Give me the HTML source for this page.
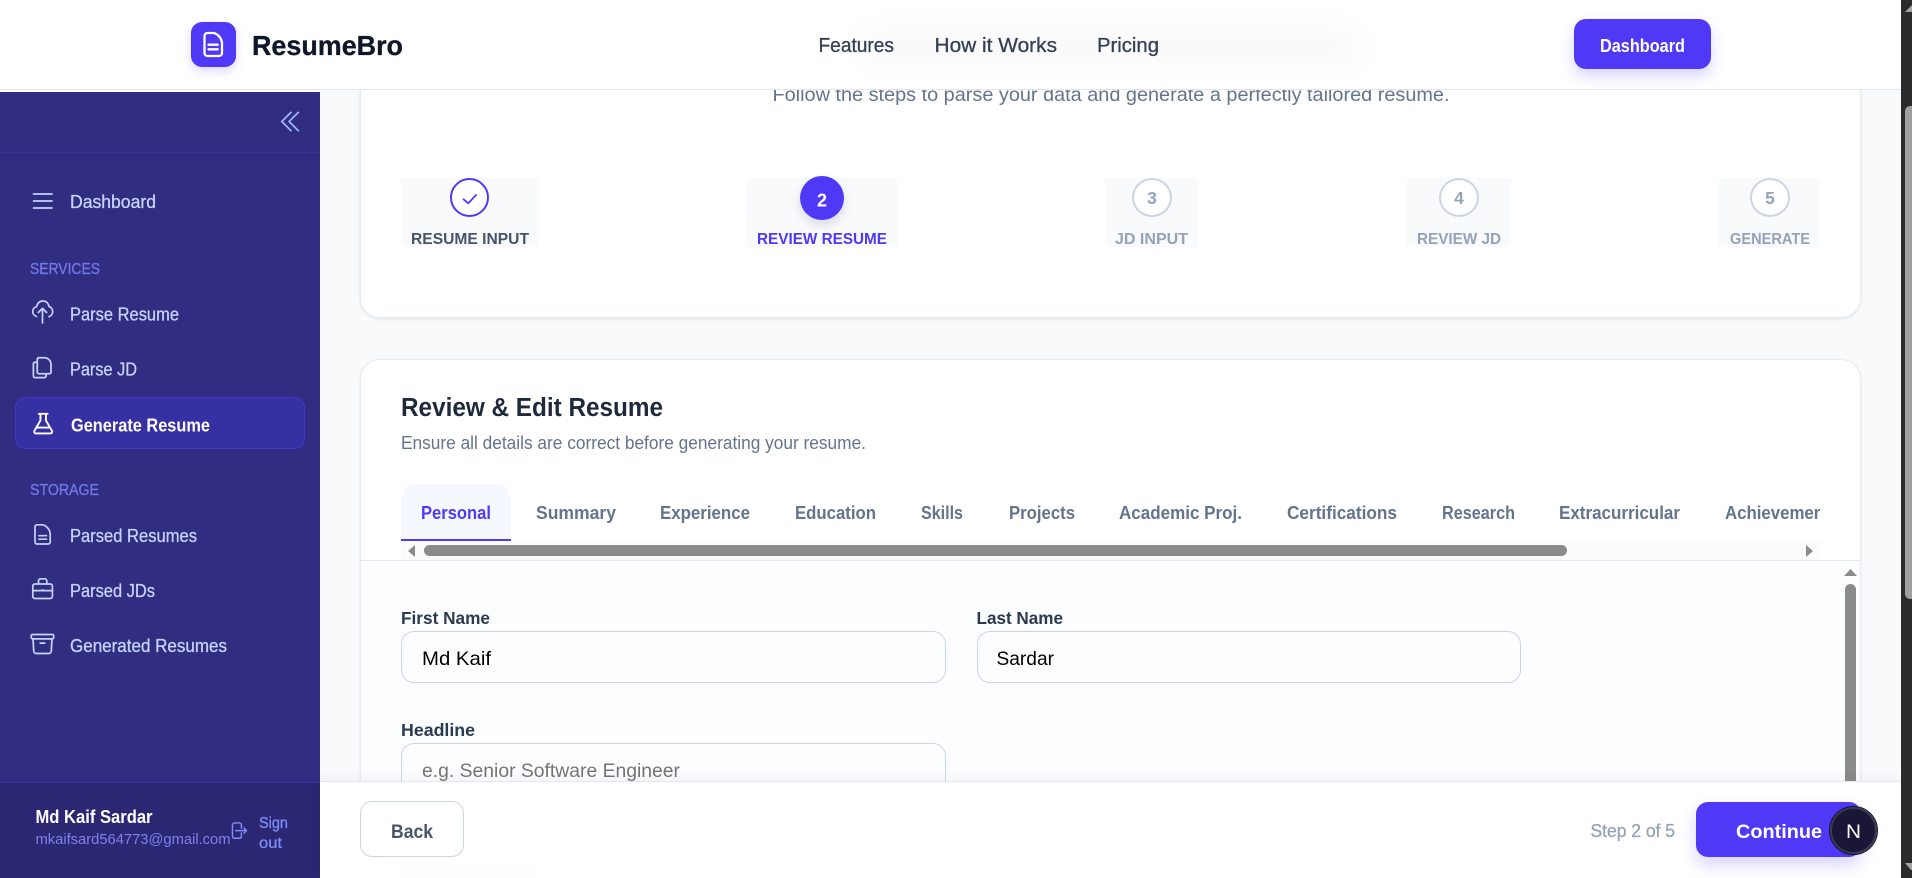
<!DOCTYPE html>
<html lang="en">
<head>
<meta charset="utf-8">
<title>ResumeBro - Generate Resume</title>
<style>
html,body{margin:0;padding:0;width:1912px;height:878px;overflow:hidden;background:#fff}
body{font-family:"Liberation Sans",Arial,sans-serif;position:relative}
.layer{position:absolute;left:0;top:0;width:1912px;height:878px;overflow:hidden;pointer-events:none}
.b{position:absolute;box-sizing:border-box}
svg.t{position:absolute;left:0;top:0;overflow:hidden}
svg.t text{fill:currentColor;font-family:"Liberation Sans",Arial,sans-serif}
.m{stroke:currentColor;stroke-width:.3}
.bd{font-weight:700}
.ic{fill:none;stroke:currentColor;stroke-linecap:round;stroke-linejoin:round}
</style>
</head>
<body>

<main class="layer">
  <div class="b" style="left:320px;top:90px;width:1581px;height:691px;background:#f8fafc"></div>
  <!-- stepper card -->
  <div class="b" style="left:360px;top:-40px;width:1501px;height:358px;background:#fff;border:1px solid #e7ecf2;border-radius:20px;box-shadow:0 1px 3px rgba(15,23,42,.1)"></div>
  <div class="b" style="left:401px;top:178px;width:138px;height:69px;background:#f8fafc"></div>
  <div class="b" style="left:747px;top:178px;width:150px;height:69px;background:#f8fafc"></div>
  <div class="b" style="left:1105px;top:178px;width:93px;height:69px;background:#f8fafc"></div>
  <div class="b" style="left:1407px;top:178px;width:104px;height:69px;background:#f8fafc"></div>
  <div class="b" style="left:1719px;top:178px;width:101px;height:69px;background:#f8fafc"></div>
  <div class="b" style="left:450px;top:178px;width:39px;height:39px;border-radius:50%;background:#fff;border:2px solid #4f39f6"></div>
  <div class="b" style="left:800px;top:176px;width:44px;height:44px;border-radius:50%;background:#4f39f6;box-shadow:0 5px 10px rgba(30,30,80,.14)"></div>
  <div class="b" style="left:1132px;top:178px;width:40px;height:39px;border-radius:50%;background:#fff;border:2px solid #cbd5e1"></div>
  <div class="b" style="left:1439px;top:178px;width:40px;height:39px;border-radius:50%;background:#fff;border:2px solid #cbd5e1"></div>
  <div class="b" style="left:1750px;top:178px;width:40px;height:39px;border-radius:50%;background:#fff;border:2px solid #cbd5e1"></div>

  <!-- editor card -->
  <div class="b" style="left:360px;top:359px;width:1501px;height:560px;background:#fff;border:1px solid #e7ecf2;border-radius:20px;box-shadow:0 1px 3px rgba(15,23,42,.08)"></div>
  <div class="b" style="left:361px;top:560px;width:1499px;height:300px;background:#fcfdff;border-top:1px solid #e2e8f0"></div>
  <div class="b" style="left:401px;top:484px;width:110px;height:57px;background:#f6f8ff;border-radius:14px 14px 0 0;border-bottom:2px solid #4f39f6"></div>
  <div class="b" style="left:401px;top:541px;width:1419px;height:19px;background:#fbfbfb"></div>
  <div class="b" style="left:424px;top:545px;width:1143px;height:11px;background:#8b8b8b;border-radius:6px"></div>
  <div class="b" style="left:1845px;top:584px;width:11px;height:220px;background:#8b8b8b;border-radius:6px"></div>
  <div class="b" style="left:401px;top:631px;width:545px;height:52px;border:1px solid #cbd5e1;border-radius:13px"></div>
  <div class="b" style="left:977px;top:631px;width:544px;height:52px;border:1px solid #cbd5e1;border-radius:13px"></div>
  <div class="b" style="left:401px;top:743px;width:545px;height:60px;border:1px solid #cbd5e1;border-radius:13px"></div>

  <svg class="t" width="1912" height="878" viewBox="0 0 1912 878">
    <defs><clipPath id="tabclip"><rect x="401" y="484" width="1419" height="57"/></clipPath></defs>
    <text x="772.5" y="101" font-size="19.5" textLength="677" lengthAdjust="spacingAndGlyphs" style="color:#64748b">Follow the steps to parse your data and generate a perfectly tailored resume.</text>

    <path class="ic" d="M463.5 199.3L468.3 203.3L476 195" stroke-width="1.8" style="color:#4f39f6"/>
    <text x="822" y="206.5" font-size="18" class="bd" text-anchor="middle" style="color:#fff">2</text>
    <g class="bd" font-size="17.5" text-anchor="middle" style="color:#94a3b8">
      <text x="1152" y="204">3</text><text x="1459" y="204">4</text><text x="1770" y="204">5</text>
    </g>
    <g class="bd" font-size="15.8">
      <text x="411" y="244" textLength="118" lengthAdjust="spacingAndGlyphs" style="color:#475569">RESUME INPUT</text>
      <text x="757" y="244" textLength="130" lengthAdjust="spacingAndGlyphs" style="color:#4f39f6">REVIEW RESUME</text>
      <text x="1115" y="244" textLength="73" lengthAdjust="spacingAndGlyphs" style="color:#94a3b8">JD INPUT</text>
      <text x="1417" y="244" textLength="84" lengthAdjust="spacingAndGlyphs" style="color:#94a3b8">REVIEW JD</text>
      <text x="1730" y="244" textLength="80" lengthAdjust="spacingAndGlyphs" style="color:#94a3b8">GENERATE</text>
    </g>

    <text x="401" y="416" font-size="25.5" class="bd" textLength="262" lengthAdjust="spacingAndGlyphs" style="color:#1e293b">Review &amp; Edit Resume</text>
    <text x="401" y="449" font-size="18" textLength="465" lengthAdjust="spacingAndGlyphs" style="color:#64748b">Ensure all details are correct before generating your resume.</text>

    <g class="bd" font-size="18" clip-path="url(#tabclip)" style="color:#64748b">
      <text x="421" y="519" textLength="70" lengthAdjust="spacingAndGlyphs" style="color:#4f39f6">Personal</text>
      <text x="536" y="519" textLength="80" lengthAdjust="spacingAndGlyphs">Summary</text>
      <text x="660" y="519" textLength="90" lengthAdjust="spacingAndGlyphs">Experience</text>
      <text x="795" y="519" textLength="81" lengthAdjust="spacingAndGlyphs">Education</text>
      <text x="921" y="519" textLength="42" lengthAdjust="spacingAndGlyphs">Skills</text>
      <text x="1009" y="519" textLength="66" lengthAdjust="spacingAndGlyphs">Projects</text>
      <text x="1119" y="519" textLength="123" lengthAdjust="spacingAndGlyphs">Academic Proj.</text>
      <text x="1287" y="519" textLength="110" lengthAdjust="spacingAndGlyphs">Certifications</text>
      <text x="1442" y="519" textLength="73" lengthAdjust="spacingAndGlyphs">Research</text>
      <text x="1559" y="519" textLength="121" lengthAdjust="spacingAndGlyphs">Extracurricular</text>
      <text x="1725" y="519" textLength="114" lengthAdjust="spacingAndGlyphs">Achievements</text>
    </g>

    <path d="M415 545V557L408 551Z" fill="#8b8b8b"/>
    <path d="M1806 545V557L1813 551Z" fill="#8b8b8b"/>
    <path d="M1844 576H1857L1850.5 569Z" fill="#8b8b8b"/>

    <g class="bd" font-size="17.3" style="color:#2b3a4f">
      <text x="401" y="624" textLength="89" lengthAdjust="spacingAndGlyphs">First Name</text>
      <text x="976.5" y="624" textLength="86.5" lengthAdjust="spacingAndGlyphs">Last Name</text>
      <text x="401" y="736" textLength="74" lengthAdjust="spacingAndGlyphs">Headline</text>
    </g>
    <g font-size="19.8" style="color:#000">
      <text x="422" y="665" textLength="69" lengthAdjust="spacingAndGlyphs">Md Kaif</text>
      <text x="996.5" y="665" textLength="57.5" lengthAdjust="spacingAndGlyphs">Sardar</text>
    </g>
    <text x="422" y="777" font-size="19.8" textLength="258" lengthAdjust="spacingAndGlyphs" style="color:#757575">e.g. Senior Software Engineer</text>
  </svg>
</main>

<aside class="layer">
  <div class="b" style="left:0;top:92px;width:320px;height:786px;background:#312e81"></div>
  <div class="b" style="left:0;top:152px;width:320px;height:1px;background:#3730a3"></div>
  <div class="b" style="left:15px;top:397px;width:290px;height:52px;background:#3730a3;border:1px solid #4338ca;border-radius:11px"></div>
  <div class="b" style="left:0;top:782px;width:320px;height:96px;background:#2b2772;border-top:1px solid #3730a3"></div>
  <svg class="t" width="1912" height="878" viewBox="0 0 1912 878">
    <g transform="translate(275.4 106.9) scale(1.22)"><path class="ic" stroke-width="1.4" style="color:#a5b4fc" d="M18.75 4.5l-7.5 7.5 7.5 7.5m-6-15L5.25 12l7.5 7.5"/></g>

    <g style="color:#c7d2fe">
      <path class="ic" stroke-width="1.7" d="M33.5 194H52M33.5 201H52M33.5 208H52"/>
      <path class="ic" stroke-width="1.7" d="M36.5 316.5C33.5 315.5 32.5 313 32.7 311C33 308.5 34.8 307 36.5 306.8C37.5 303 40 301 43 301C46.5 301 48.5 303.5 49 306.5C51 307 52.7 309 52.7 311.5C52.7 314 51 316 49 316.7M42.5 323V308.5M38.3 312.5L42.5 308.3L46.6 312.5"/>
      <g transform="translate(29 354.5) scale(1.1)"><path class="ic" stroke-width="1.6" d="M9 3h5a6 6 0 0 1 6 6v7a1.5 1.5 0 0 1-1.5 1.5H9A1.5 1.5 0 0 1 7.5 16V4.5A1.5 1.5 0 0 1 9 3ZM7.5 7H5.5A1.5 1.5 0 0 0 4 8.5v11A1.5 1.5 0 0 0 5.5 21H14a1.5 1.5 0 0 0 1.5-1.5v-2"/></g>
      <path class="ic" stroke-width="1.7" d="M37 524.8H43C47 526 50 530 50.2 534V542a2 2 0 0 1-2 2H37a2 2 0 0 1-2-2V526.8a2 2 0 0 1 2-2ZM39 535.7H46.5M39 539.2H46.5"/>
      <path class="ic" stroke-width="1.7" d="M35 584H50.2a2.2 2.2 0 0 1 2.2 2.2V596.3a2.2 2.2 0 0 1-2.2 2.2H35a2.2 2.2 0 0 1-2.2-2.2V586.2A2.2 2.2 0 0 1 35 584ZM38.5 584V581a2.2 2.2 0 0 1 2.2-2.2H44.6a2.2 2.2 0 0 1 2.2 2.2V584M33 590.6H52.2M42.6 589.8V590.2"/>
      <g transform="translate(28.7 630.2) scale(1.15)"><path class="ic" stroke-width="1.5" d="M20.25 7.5l-.625 10.632a2.25 2.25 0 0 1-2.247 2.118H6.622a2.25 2.25 0 0 1-2.247-2.118L3.75 7.5M10 11.25h4M3.375 7.5h17.25c.621 0 1.125-.504 1.125-1.125v-1.5c0-.621-.504-1.125-1.125-1.125H3.375c-.621 0-1.125.504-1.125 1.125v1.5c0 .621.504 1.125 1.125 1.125Z"/></g>
      <g font-size="18.5" class="m">
        <text x="70" y="208" textLength="86" lengthAdjust="spacingAndGlyphs">Dashboard</text>
        <text x="70" y="320.5" textLength="109" lengthAdjust="spacingAndGlyphs">Parse Resume</text>
        <text x="70" y="375.5" textLength="67" lengthAdjust="spacingAndGlyphs">Parse JD</text>
        <text x="70" y="542" textLength="127" lengthAdjust="spacingAndGlyphs">Parsed Resumes</text>
        <text x="70" y="597" textLength="85" lengthAdjust="spacingAndGlyphs">Parsed JDs</text>
        <text x="70" y="652" textLength="157" lengthAdjust="spacingAndGlyphs">Generated Resumes</text>
      </g>
    </g>
    <g font-size="16" class="m" style="color:#7478eb">
      <text x="30" y="274" textLength="70" lengthAdjust="spacingAndGlyphs">SERVICES</text>
      <text x="30" y="495" textLength="69" lengthAdjust="spacingAndGlyphs">STORAGE</text>
    </g>

    <g style="color:#fff">
      <g transform="translate(30 410) scale(1.1)"><path class="ic" stroke-width="1.7" d="M8 3.5h8M9.5 3.5v6L4 19a1.5 1.5 0 0 0 1.3 2.3h13.4A1.5 1.5 0 0 0 20 19l-5.5-9.5v-6M6.5 16h11"/></g>
      <text x="71" y="431.5" font-size="18.5" class="bd" textLength="139" lengthAdjust="spacingAndGlyphs">Generate Resume</text>
    </g>

    <text x="35.5" y="823" font-size="18" class="bd" textLength="117" lengthAdjust="spacingAndGlyphs" style="color:#fff">Md Kaif Sardar</text>
    <text x="35.5" y="844" font-size="15.2" textLength="195" lengthAdjust="spacingAndGlyphs" style="color:#7c82ee">mkaifsard564773@gmail.com</text>
    <g style="color:#818cf8">
      <g transform="translate(228 820.4) scale(.85)"><path class="ic" stroke-width="1.7" d="M15.75 9V5.25A2.25 2.25 0 0 0 13.5 3h-6a2.25 2.25 0 0 0-2.25 2.25v13.5A2.25 2.25 0 0 0 7.5 21h6a2.25 2.25 0 0 0 2.25-2.25V15m3 0l3-3m0 0l-3-3m3 3H9"/></g>
      <g font-size="16" class="m">
        <text x="259" y="828" textLength="29" lengthAdjust="spacingAndGlyphs">Sign</text>
        <text x="259" y="848" textLength="23" lengthAdjust="spacingAndGlyphs">out</text>
      </g>
    </g>
  </svg>
</aside>

<header class="layer">
  <div class="b" style="left:0;top:0;width:1901px;height:90px;background:#fff;border-bottom:1px solid #e2e8f0"></div>
  <div class="b" style="left:860px;top:28px;width:500px;height:38px;background:#000;opacity:.022;filter:blur(16px)"></div>
  <div class="b" style="left:191px;top:22px;width:45px;height:45px;background:#4f39f6;border-radius:11px;box-shadow:0 4px 10px rgba(79,57,246,.2)"></div>
  <div class="b" style="left:1574px;top:19px;width:137px;height:50px;background:#4f39f6;border-radius:12px;box-shadow:0 7px 14px rgba(79,57,246,.22)"></div>
  <svg class="t" width="1912" height="878" viewBox="0 0 1912 878">
    <path class="ic" stroke-width="2.3" style="color:#fff" d="M207.5 33H214C218.5 34.5 221.6 38.5 222 43V53a3 3 0 0 1-3 3H207.5a3 3 0 0 1-3-3V36a3 3 0 0 1 3-3ZM208.5 44.7H217.7M208.5 49.3H217.7"/>
    <text x="252" y="55" font-size="28" class="bd m" textLength="151" lengthAdjust="spacingAndGlyphs" style="color:#0f172a">ResumeBro</text>
    <g font-size="20" class="m" style="color:#334155">
      <text x="818.5" y="52" textLength="75.5" lengthAdjust="spacingAndGlyphs">Features</text>
      <text x="934.5" y="52" textLength="122.5" lengthAdjust="spacingAndGlyphs">How it Works</text>
      <text x="1097" y="52" textLength="62" lengthAdjust="spacingAndGlyphs">Pricing</text>
    </g>
    <text x="1600" y="52" font-size="18.5" class="bd" textLength="85" lengthAdjust="spacingAndGlyphs" style="color:#fff">Dashboard</text>
  </svg>
</header>

<footer class="layer">
  <div class="b" style="left:320px;top:781px;width:1581px;height:97px;background:#fff;border-top:1px solid #e2e8f0;box-shadow:0 -4px 10px rgba(15,23,42,.04)"></div>
  <div class="b" style="left:400px;top:866px;width:135px;height:14px;background:#000;opacity:.012;filter:blur(6px)"></div>
  <div class="b" style="left:360px;top:801px;width:104px;height:56px;background:#fff;border:1px solid #cbd5e1;border-radius:12px"></div>
  <div class="b" style="left:1696px;top:802px;width:165px;height:55px;background:#4f39f6;border-radius:12px;box-shadow:0 8px 16px rgba(79,57,246,.22)"></div>
  <div class="b" style="left:1830px;top:807px;width:47px;height:47px;background:#1a1638;border:2px solid #3a3a4e;border-radius:50%;outline:1px solid #15132b"></div>
  <svg class="t" width="1912" height="878" viewBox="0 0 1912 878">
    <text x="391" y="838" font-size="19" class="bd" textLength="42" lengthAdjust="spacingAndGlyphs" style="color:#475569">Back</text>
    <text x="1590.5" y="837" font-size="18" class="m" textLength="84.5" lengthAdjust="spacingAndGlyphs" style="color:#94a3b8">Step 2 of 5</text>
    <text x="1736" y="838" font-size="19" class="bd" textLength="86" lengthAdjust="spacingAndGlyphs" style="color:#fff">Continue</text>
    <text x="1846" y="838" font-size="19.5" textLength="15" lengthAdjust="spacingAndGlyphs" style="color:#fff">N</text>
  </svg>
</footer>

<div class="layer">
  <div class="b" style="left:1901px;top:0;width:11px;height:878px;background:#2b2b2b"></div>
  <div class="b" style="left:1905px;top:106px;width:7px;height:493px;background:#9f9f9f;border-radius:5px 0 0 5px"></div>
  <svg class="t" width="1912" height="878" viewBox="0 0 1912 878">
    <path d="M1905 12H1912V5Z" fill="#a3a3a3"/>
    <path d="M1905 863H1912V870H1911Z" fill="#a3a3a3"/>
  </svg>
</div>

</body>
</html>
